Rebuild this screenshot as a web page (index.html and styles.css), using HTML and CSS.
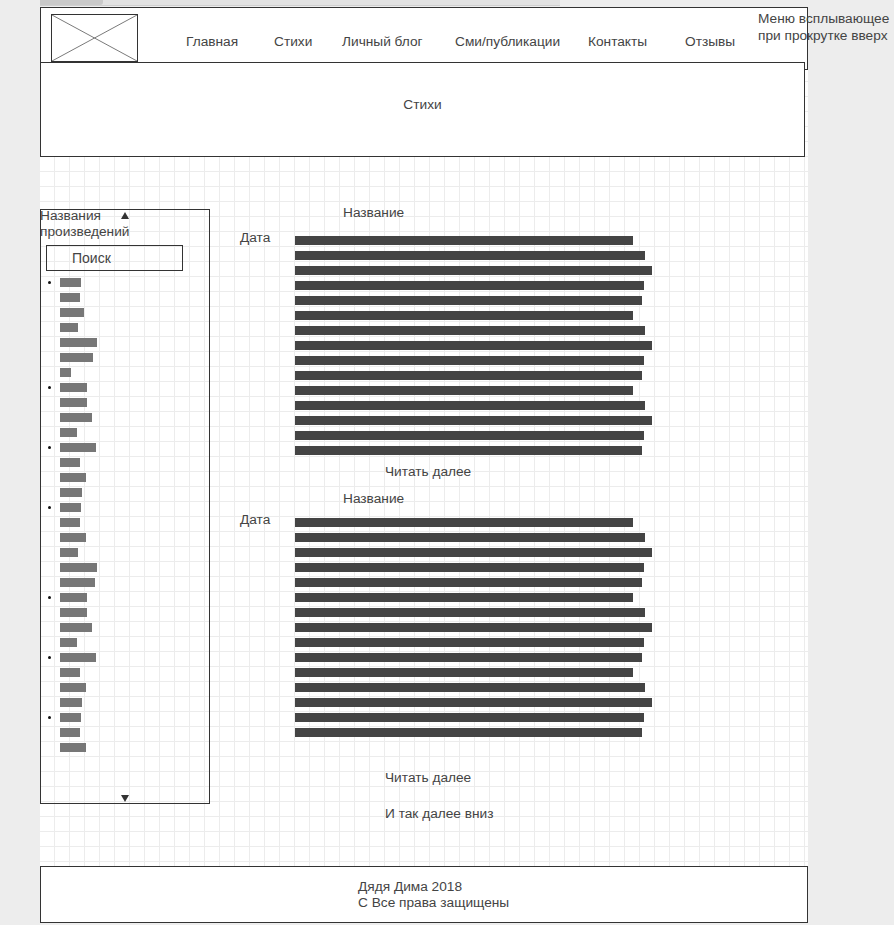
FILE: index.html
```html
<!DOCTYPE html>
<html lang="ru">
<head>
    <meta charset="UTF-8">
    <meta name="viewport" content="width=device-width, initial-scale=1.0">
    <title>Стихи - макет</title>
    <link rel="stylesheet" href="styles.css">
</head>
<body>

    <div class="topstrip">
        <div class="scrollbar"><div class="scroll-thumb"></div></div>
    </div>

    <div class="page">
        <header class="header">
            <div class="logo">
                <svg width="85" height="46" viewBox="0 0 85 46" preserveAspectRatio="none">
                    <line x1="0" y1="0" x2="85" y2="46" stroke="#7a7a7a" stroke-width="1"/>
                    <line x1="85" y1="0" x2="0" y2="46" stroke="#7a7a7a" stroke-width="1"/>
                </svg>
            </div>
            <nav class="nav">
                <a>Главная</a>
                <a>Стихи</a>
                <a>Личный блог</a>
                <a>Сми/публикации</a>
                <a>Контакты</a>
                <a>Отзывы</a>
            </nav>
            <div class="note">Меню всплывающее<br>при прокрутке вверх</div>
        </header>

        <div class="banner">Стихи</div>

        <div class="main">
            <aside class="sidebar">
                <div class="side-title">Названия произведений</div>
                <span class="arrow arrow-up"></span>
                <div class="search">Поиск</div>
                <ul class="works">
                    <li class="dot"><span style="width:21px"></span></li>
                    <li><span style="width:20px"></span></li>
                    <li><span style="width:24px"></span></li>
                    <li><span style="width:18px"></span></li>
                    <li><span style="width:37px"></span></li>
                    <li><span style="width:33px"></span></li>
                    <li><span style="width:11px"></span></li>
                    <li class="dot"><span style="width:27px"></span></li>
                    <li><span style="width:27px"></span></li>
                    <li><span style="width:32px"></span></li>
                    <li><span style="width:17px"></span></li>
                    <li class="dot"><span style="width:36px"></span></li>
                    <li><span style="width:20px"></span></li>
                    <li><span style="width:26px"></span></li>
                    <li><span style="width:22px"></span></li>
                    <li class="dot"><span style="width:21px"></span></li>
                    <li><span style="width:20px"></span></li>
                    <li><span style="width:26px"></span></li>
                    <li><span style="width:18px"></span></li>
                    <li><span style="width:37px"></span></li>
                    <li><span style="width:35px"></span></li>
                    <li class="dot"><span style="width:27px"></span></li>
                    <li><span style="width:27px"></span></li>
                    <li><span style="width:32px"></span></li>
                    <li><span style="width:17px"></span></li>
                    <li class="dot"><span style="width:36px"></span></li>
                    <li><span style="width:20px"></span></li>
                    <li><span style="width:26px"></span></li>
                    <li><span style="width:22px"></span></li>
                    <li class="dot"><span style="width:21px"></span></li>
                    <li><span style="width:20px"></span></li>
                    <li><span style="width:26px"></span></li>
                </ul>
                <span class="arrow arrow-down"></span>
            </aside>

            <section class="content">
                <div class="post-title">Название</div>
                <div class="post-body">
                    <div class="post-date">Дата</div>
                    <div class="lines">
                        <i></i><i></i><i></i><i></i><i></i>
                        <i></i><i></i><i></i><i></i><i></i>
                        <i></i><i></i><i></i><i></i><i></i>
                    </div>
                </div>
                <div class="more">Читать далее</div>

                <div class="post-title second">Название</div>
                <div class="post-body second">
                    <div class="post-date">Дата</div>
                    <div class="lines">
                        <i></i><i></i><i></i><i></i><i></i>
                        <i></i><i></i><i></i><i></i><i></i>
                        <i></i><i></i><i></i><i></i><i></i>
                    </div>
                </div>
                <div class="more last">Читать далее</div>
                <div class="more down">И так далее вниз</div>
            </section>
        </div>

        <footer class="footer">
            Дядя Дима 2018<br>
            С Все права защищены
        </footer>
    </div>

</body>
</html>
```

FILE: styles.css
```css
* {
    margin: 0;
    padding: 0;
    box-sizing: border-box;
}
body {
    font-family: "Liberation Sans", Arial, sans-serif;
    font-size: 13.7px;
    color: #444;
    background-color: #ededed;
}
.topstrip {
    height: 7px;
    padding-left: 40px;
}
.scrollbar {
    width: 520px;
    height: 6px;
    background-color: #e2e2e2;
    border-bottom: 1px solid #cfcfcf;
}
.scroll-thumb {
    width: 63px;
    height: 5px;
    background-color: #c9c9c9;
    border-bottom-right-radius: 3px;
}
.page {
    position: relative;
    width: 768px;
    height: 916px;
    margin-left: 40px;
    display: flex;
    flex-direction: column;
    background-color: #fff;
    background-image:
        linear-gradient(to right, #ececec 1px, transparent 1px),
        linear-gradient(to bottom, #ececec 1px, transparent 1px);
    background-size: 15px 15px;
    background-position: 14px 14px;
}
.header {
    position: relative;
    height: 63px;
    display: flex;
    border: 1px solid #333;
    background-color: #fff;
}
.logo {
    width: 87px;
    height: 48px;
    margin: 6px 0 0 10px;
    border: 1px solid #333;
}
.logo svg {
    display: block;
}
.nav {
    display: grid;
    grid-template-columns: 88px 68px 113px 133px 97px auto;
    margin: 25px 0 0 48px;
    line-height: 18px;
}
.nav a {
    white-space: nowrap;
}
.note {
    position: absolute;
    left: 717px;
    top: 2px;
    line-height: 17px;
    white-space: nowrap;
}
.banner {
    position: relative;
    width: 765px;
    height: 95px;
    margin-top: -8px;
    padding-top: 33px;
    line-height: 18px;
    text-align: center;
    border: 1px solid #333;
    background-color: #fff;
}
.main {
    display: flex;
    margin-top: 46px;
}
.sidebar {
    position: relative;
    width: 170px;
    height: 595px;
    margin-top: 6px;
    border: 1px solid #333;
}
.side-title {
    width: 100px;
    margin: -2px 0 0 -1px;
    line-height: 16px;
}
.arrow {
    position: absolute;
    left: 80px;
    width: 0;
    height: 0;
    border-left: 4px solid transparent;
    border-right: 4px solid transparent;
}
.arrow-up {
    top: 2px;
    border-bottom: 7px solid #333;
}
.arrow-down {
    top: 585px;
    border-top: 7px solid #333;
}
.search {
    width: 137px;
    height: 26px;
    margin: 5px 0 0 5px;
    padding-left: 25px;
    line-height: 24px;
    font-size: 14px;
    border: 1px solid #333;
}
.works {
    list-style: none;
    margin-top: 4px;
}
.works li {
    display: flex;
    align-items: center;
    height: 15px;
    padding-left: 19px;
    position: relative;
}
.works li span {
    display: block;
    height: 9px;
    background-color: #777;
}
.works li.dot::before {
    content: "";
    position: absolute;
    left: 7px;
    top: 6px;
    width: 3px;
    height: 3px;
    border-radius: 50%;
    background-color: #111;
}
.content {
    flex: 1;
    padding-left: 30px;
}
.post-title {
    padding: 1px 0 0 103px;
    line-height: 18px;
}
.post-title.second {
    margin-top: 8px;
}
.post-body {
    display: flex;
    margin-top: 14px;
}
.post-body.second {
    margin-top: 10px;
}
.post-date {
    width: 55px;
    margin-top: -5px;
    line-height: 14px;
}
.lines {
    display: flex;
    flex-direction: column;
    gap: 6px;
}
.lines i {
    display: block;
    height: 9px;
    background-color: #444;
}
.lines i:nth-child(5n+1) { width: 338px; }
.lines i:nth-child(5n+2) { width: 350px; }
.lines i:nth-child(5n+3) { width: 357px; }
.lines i:nth-child(5n+4) { width: 349px; }
.lines i:nth-child(5n) { width: 347px; }
.more {
    margin-top: 7px;
    padding: 1px 0 0 145px;
    line-height: 18px;
}
.more.last {
    margin-top: 31px;
}
.more.down {
    margin-top: 17px;
}
.footer {
    height: 57px;
    margin-top: auto;
    padding: 12px 0 0 317px;
    line-height: 16px;
    border: 1px solid #333;
    background-color: #fff;
}
```
